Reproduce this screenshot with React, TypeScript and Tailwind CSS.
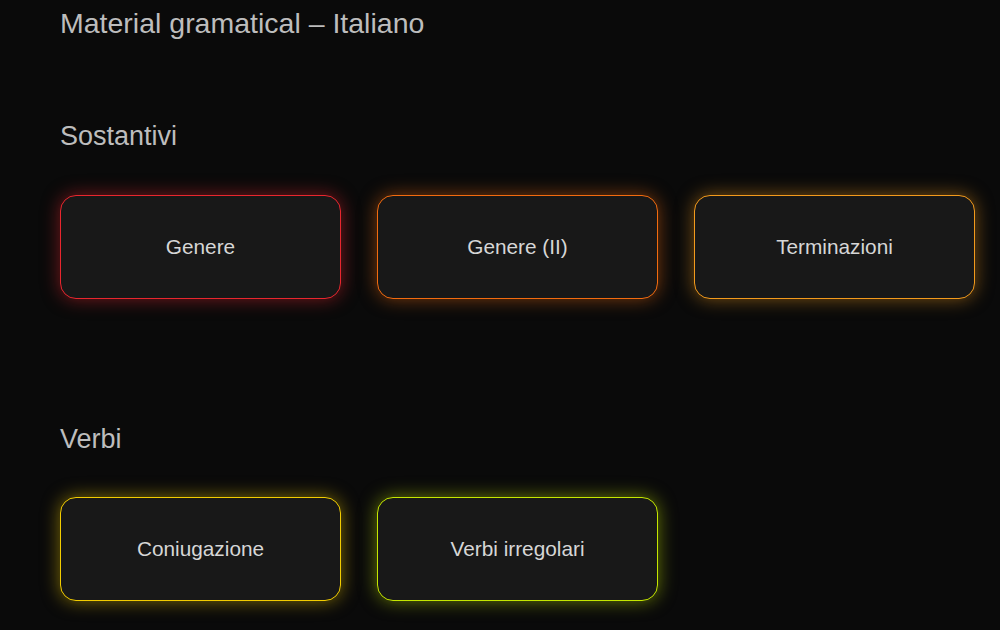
const sections = [
  {
    title: "Sostantivi",
    gap: "mt-[80px]",
    cardsGap: "mt-[42px]",
    cards: [
      { label: "Genere", cls: "border-[#e8262e] shadow-[0_0_18px_rgba(232,38,46,0.5)]" },
      { label: "Genere (II)", cls: "border-[#f26b0f] shadow-[0_0_18px_rgba(242,107,15,0.5)]" },
      { label: "Terminazioni", cls: "border-[#f29a1c] shadow-[0_0_18px_rgba(242,154,28,0.5)]" },
    ],
  },
  {
    title: "Verbi",
    gap: "mt-[124px]",
    cardsGap: "mt-[41px]",
    cards: [
      { label: "Coniugazione", cls: "border-[#f2cc00] shadow-[0_0_18px_rgba(242,204,0,0.5)]" },
      { label: "Verbi irregolari", cls: "border-[#c4e600] shadow-[0_0_18px_rgba(196,230,0,0.5)]" },
    ],
  },
];

export default function App() {
  return (
    <div className="min-h-screen bg-[#0a0a0a] px-[60px] pt-[7px] pb-10 font-['Liberation_Sans',Arial,sans-serif]">
      <h1 className="text-[28.5px] leading-[33px] text-[#bdbdbd]">Material gramatical – Italiano</h1>

      <div className="flex flex-col">
        {sections.map((s) => (
          <section key={s.title} className={s.gap}>
            <h2 className="text-[27px] leading-[33px] text-[#bdbdbd]">{s.title}</h2>
            <div className={`${s.cardsGap} grid grid-cols-[281px_281px_281px] gap-x-[36px]`}>
              {s.cards.map((c) => (
                <button
                  key={c.label}
                  className={`h-[104px] rounded-[16px] border bg-[#181818] flex items-center justify-center text-[20.8px] text-[#d6d6d6] ${c.cls}`}
                >
                  {c.label}
                </button>
              ))}
            </div>
          </section>
        ))}
      </div>
    </div>
  );
}
